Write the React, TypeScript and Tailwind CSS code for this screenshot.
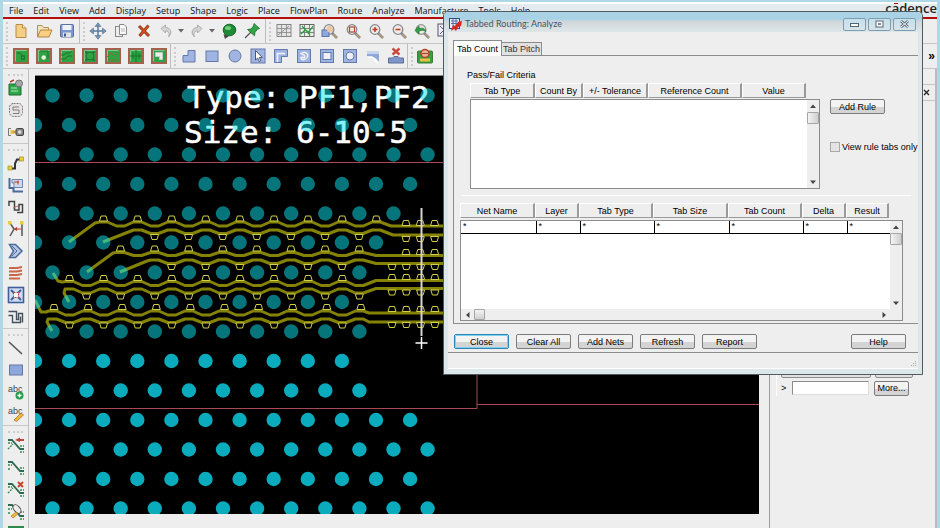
import React from "react";

type Kids = { children?: React.ReactNode };

const ui = "font-['Liberation_Sans',Arial,sans-serif]";

/* ---------- toolbar icons ---------- */

const Glyph = ({ children }: Kids) => (
  <svg width="18" height="18" viewBox="0 0 18 18" fill="none" aria-hidden="true" className="block shrink-0">
    {children}
  </svg>
);

const Board = ({ children }: Kids) => (
  <Glyph>
    <rect x="1" y="1" width="16" height="16" fill="#a5614f" />
    <rect x="3" y="3" width="12" height="12" fill="#2fa341" />
    <path d="M3.500 14.500v-11h11" stroke="#7fc98a" />
    <g stroke="#1b7431" strokeWidth="1">{children}</g>
  </Glyph>
);

const Lens = ({ children, ring = "#85898f" }: Kids & { ring?: string }) => (
  <Glyph>
    <path d="M11 11l5 5" stroke="#7d8aa0" strokeWidth="2.6" />
    <path d="M12 12l4 4" stroke="#c89a5a" strokeWidth="1.2" />
    <circle cx="8" cy="7.5" r="4.8" fill="#f1e9e6" stroke={ring} strokeWidth="1.3" />
    {children}
  </Glyph>
);

const blue = { fill: "#9fb4e0", stroke: "#6278a8", strokeWidth: 1 };

const fileIcons: [string, React.ReactNode][] = [
  ["New", <Glyph><path d="M4 2.500h6.500L14 6v9.500H4z" fill="#f3cf85" stroke="#b98b45" /><path d="M10.500 2.500V6H14" fill="#fff3cf" stroke="#b98b45" /></Glyph>],
  ["Open", <Glyph><path d="M2.500 15V3.500H7l1.500 2h5V8" fill="#f2e3bf" stroke="#b58d4d" /><path d="M2.500 15L5.500 8h11.500l-3 7z" fill="#f8cf80" stroke="#b58344" /></Glyph>],
  ["Save", <Glyph><rect x="2.500" y="2.500" width="13" height="12.500" rx="1" fill="#7d96cf" stroke="#5e6f9a" /><rect x="4.500" y="3" width="9" height="5" fill="#eef1f7" /><rect x="5" y="10.500" width="8" height="4.500" fill="#dfe2e6" /><rect x="6" y="11.500" width="2" height="3" fill="#42578a" /></Glyph>],
];

const editIcons: [string, React.ReactNode][] = [
  ["Move", <Glyph><path d="M9 1.500v15M1.500 9h15" stroke="#59799b" strokeWidth="1.500" /><path d="M9 .8L6 4.500h6zM9 17.200L6 13.500h6zM.8 9l3.700-3v6zM17.200 9l-3.700-3v6z" fill="#7897b5" stroke="#506f90" strokeWidth=".6" /></Glyph>],
  ["Copy", <Glyph><rect x="3.500" y="4.500" width="7" height="10" fill="#eee" stroke="#888" /><path d="M7.500 2.500h4.500l2.500 2.500v7.500h-7z" fill="#f8f8f8" stroke="#888" /><path d="M9 7h4M9 9h4" stroke="#aaa" strokeWidth=".8" /></Glyph>],
  ["Delete", <Glyph><path d="M4 4l10 10M13.500 3.500L4.500 14" stroke="#8b3a1b" strokeWidth="3" /><path d="M4.500 4.500l9 9M13 4l-8 9.500" stroke="#d8501e" strokeWidth="1.400" /></Glyph>],
];

const Undo = () => (
  <Glyph><path d="M3 6.500L7.500 3v2.500c5 0 7.500 5 3 9.500 1.500-4 0-6-3-6V11z" fill="#d4d4d4" stroke="#a2a2a2" strokeWidth=".8" /></Glyph>
);
const Redo = () => (
  <Glyph><path d="M15 6.500L10.500 3v2.500c-5 0-7.500 5-3 9.500-1.500-4 0-6 3-6V11z" fill="#d4d4d4" stroke="#a2a2a2" strokeWidth=".8" /></Glyph>
);

const pinIcons: [string, React.ReactNode][] = [
  ["Highlight", <Glyph><path d="M3.500 12l1.500 5 4-3z" fill="#444" /><ellipse cx="9.500" cy="8" rx="6.300" ry="5.800" fill="#1f8a35" stroke="#196627" /><ellipse cx="8" cy="6" rx="3" ry="2" fill="#6fd07b" /></Glyph>],
  ["Pin", <Glyph><path d="M8 10L2 16" stroke="#555" strokeWidth="1.300" /><path d="M11 1.500l5.500 5-2 .8-2.500 3-.5 3.500L4.500 7.500 8 7l2.500-3z" fill="#2fa545" stroke="#1b6b2c" strokeWidth=".8" /></Glyph>],
];

const viewIcons: [string, React.ReactNode][] = [
  ["Grid", <Glyph><rect x="2" y="2.500" width="14" height="12" fill="#e4e4e4" stroke="#858585" /><path d="M2 6.500h14M2 10.500h14M6.500 2.500v12M11.500 2.500v12M3 13L14 4" stroke="#8e8e8e" strokeWidth=".9" /></Glyph>],
  ["Colored grid", <Glyph><rect x="2" y="2.500" width="14" height="12" fill="#e6eee6" stroke="#666" /><path d="M2 6.500h14M2 10.500h14M6.500 2.500v12M11.500 2.500v12" stroke="#777" strokeWidth=".9" /><path d="M3 12l4-4 4 2 4-6M4 4l8 9" stroke="#28a03d" strokeWidth="1.200" /></Glyph>],
  ["Zoom points", <Lens><rect x="1" y="8" width="7" height="6.500" fill="#8ea9dd" stroke="#5d74a8" /><circle cx="9" cy="7" r="3.200" fill="#eac9a4" /></Lens>],
  ["Zoom fit", <Lens><rect x="5.500" y="5" width="5" height="5" stroke="#b34a35" strokeWidth="1.200" /></Lens>],
  ["Zoom in", <Lens><path d="M8 5v5M5.500 7.500h5" stroke="#c2341f" strokeWidth="1.500" /></Lens>],
  ["Zoom out", <Lens><path d="M5.500 7.500h5" stroke="#c2341f" strokeWidth="1.500" /></Lens>],
  ["Zoom previous", <Lens ring="#8a948c"><path d="M2 8.500L6 4v2.500c4-1 6 0 7 3-2-1.500-4-1.500-7-.5V12z" fill="#31a046" stroke="#1e6e2e" strokeWidth=".7" /></Lens>],
  ["Zoom selection", <Glyph><rect x="2" y="2" width="12" height="12" fill="#eef" stroke="#556" /><path d="M4 4l8 8M12 4l-8 8" stroke="#557" /></Glyph>],
];

const boardIcons: [string, React.ReactNode][] = [
  ["General edit", <Board><path d="M5 6h3l2 3h3M9 12h4" /><rect x="9.500" y="9" width="3" height="3" /></Board>],
  ["Placement edit", <Board><path d="M5 4h8v8" /><circle cx="8.700" cy="10.500" r="2.200" fill="#e7efe7" stroke="none" /></Board>],
  ["Etch edit", <Board><path d="M3 8h3l2-2h3l3-2M3 12h4l3-3h4" /></Board>],
  ["Flow planner", <Board><circle cx="9" cy="9" r="4" /><path d="M4 5h2.500M11.500 5H14M4 13h2.500M11.500 13H14" strokeWidth="1.600" /></Board>],
  ["Signal integrity", <Board><path d="M3 10l4-4 3 3 4-4M4 13h9" stroke="#8a6a3c" /></Board>],
  ["IR drop", <Board><path d="M9 3v12M3 9h12M6 6v6M12 6v6" /></Board>],
  ["Shape edit", <Board><path d="M5.500 5.500h7v7H9.500v-3h-4z" fill="#e9eee9" stroke="#bcc" /></Board>],
];

const shapeIcons: [string, React.ReactNode][] = [
  ["Polygon", <Glyph><path d="M8 3.500h7V15H3V8.500h5z" {...blue} /></Glyph>],
  ["Rectangle", <Glyph><rect x="3" y="4" width="12" height="10.500" {...blue} /></Glyph>],
  ["Circle", <Glyph><circle cx="9" cy="9" r="6" {...blue} /></Glyph>],
  ["Select shape", <Glyph><rect x="2" y="2" width="14" height="14" {...blue} /><path d="M6.500 3.500v9.500l2.200-2 1.500 3.500 1.600-.8-1.500-3.200h3z" fill="#fff" stroke="#3e4a66" strokeWidth=".9" /></Glyph>],
  ["Void polygon", <Glyph><path d="M2.500 2.500h13v7h-6v6h-7z" {...blue} /><path d="M5.500 15V6.500H13" stroke="#f2f4fa" strokeWidth="1.600" /></Glyph>],
  ["Void circle", <Glyph><rect x="2.500" y="2.500" width="13" height="13" {...blue} /><path d="M6 6.500c5-3 8 1 6 4s-6 3-6 0h3.500v-2z" stroke="#f6f7fb" strokeWidth="1.300" /></Glyph>],
  ["Void rectangle", <Glyph><rect x="2.500" y="2.500" width="13" height="13" {...blue} /><rect x="5" y="5.500" width="8" height="7" fill="#eef0f5" stroke="#6278a8" /></Glyph>],
  ["Void ellipse", <Glyph><rect x="2.500" y="2.500" width="13" height="13" {...blue} /><circle cx="9" cy="9" r="4" fill="#eef0f5" stroke="#6278a8" /></Glyph>],
  ["Delete island", <Glyph><path d="M3 4h12v11c-2-3-4-5-7-5H3z" fill="#8ea6d8" /><path d="M3 4h12v3H3z" fill="#c9d3ea" /><path d="M3 10h5l6 6" stroke="#fff" strokeWidth="1.500" /></Glyph>],
  ["Remove shape", <Glyph><path d="M5.500 1.500l7 6M12.500 1.500l-7 6" stroke="#c94a3b" strokeWidth="2.400" /><path d="M1.500 11h4l1.500-1.500h4l1.500 1.500h4v5h-15z" fill="#8096c6" stroke="#5c6d97" /></Glyph>],
];

const Kit = () => (
  <Glyph><rect x="1.500" y="4" width="15" height="12" rx="1" fill="#2fa341" stroke="#3b7d36" /><circle cx="9" cy="6.500" r="4" fill="#e9b393" stroke="#b3402b" strokeWidth="1.500" /><path d="M4 11.500h10v3H4z" fill="#e8c341" /><path d="M6 6.500h6" stroke="#b3402b" /></Glyph>
);

const sideGroups: [string, React.ReactNode][][] = [
  [
    ["Place manual", <Glyph><path d="M2 5h9l3 3v8H2z" fill="#2fa84a" stroke="#1d6b30" /><circle cx="12" cy="4.500" r="3.500" fill="#a4a8a8" stroke="#6b6f70" /><path d="M4 9h6M4 12h7" stroke="#b8e6bd" /><path d="M3 3l4-2" stroke="#c0392b" strokeWidth="1.500" /></Glyph>],
    ["Symbol", <Glyph><rect x="2.500" y="2.500" width="13" height="13" rx="4" fill="#e4e4e4" stroke="#777" strokeDasharray="2 1" /><path d="M12 6H6v3h6v3.500H6" stroke="#8a7676" /></Glyph>],
    ["Quickplace", <Glyph><path d="M4 5.500H1.500v7H4" stroke="#777" /><rect x="3.500" y="7" width="4" height="4" fill="#e3c24d" /><path d="M6.500 9h3" stroke="#c0392b" /><rect x="9" y="5.500" width="7.500" height="7" rx="1.500" fill="#888" stroke="#444" /><circle cx="12.700" cy="9" r="1.800" fill="#ddd" /></Glyph>],
  ],
  [
    ["Add connect", <Glyph><path d="M3 14.500h5v-5l2-4h5" stroke="#333" strokeWidth="2" /><rect x="1" y="12" width="4" height="4" fill="#e7cf3f" stroke="#988421" strokeWidth=".6" /><rect x="12.500" y="3" width="4" height="4" fill="#e7cf3f" stroke="#988421" strokeWidth=".6" /></Glyph>],
    ["Slide", <Glyph><path d="M2.500 2v10h4v3.500h9.500" stroke="#4b6b9a" strokeWidth="2" /><path d="M5 3.500h10.500v8H7V7H5z" fill="#cfd9ea" stroke="#6784b2" /><path d="M7 6h5M11 4.500v4" stroke="#c0392b" /></Glyph>],
    ["Delay tune", <Glyph><path d="M2 8V3.500h5.500V12H12V6.500h3.500v8H10" stroke="#444" strokeWidth="1.500" /><path d="M6 10l5-2" stroke="#c46a5c" /></Glyph>],
    ["Custom smooth", <Glyph><path d="M3 3l4 6-4 7M15 3v13" stroke="#555" strokeWidth="1.500" /><path d="M7 9h7M10 7.500l-2 1.500 2 1.500" stroke="#c0392b" strokeWidth="1.200" /><rect x="1" y="1" width="3.500" height="3.500" fill="#e7cf3f" /><rect x="13" y="1" width="3.500" height="3.500" fill="#e7cf3f" /></Glyph>],
    ["Spread", <Glyph><path d="M2.500 2.500h6l6.500 6.500-6.500 6.500h-6l4-6.500z" fill="#b7c9e4" stroke="#4b6b9a" strokeWidth="1.500" /><path d="M5 4l5 5-5 5" stroke="#4b6b9a" /></Glyph>],
    ["Vertex", <Glyph><path d="M2 4h8l5-1M2 7.500h8M2 11h8l5-1M2 14.500h11M10 7.500l5-1" stroke="#c8674a" strokeWidth="2" /></Glyph>],
    ["Fanout", <Glyph><rect x="1.500" y="1.500" width="15" height="15" fill="#cfdcf2" stroke="#3f5f9a" strokeWidth="1.600" /><path d="M4 4l3 3M14 4l-3 3M4 14l3-3M14 14l-3-3" stroke="#3f5f9a" strokeWidth="2" /><rect x="6.500" y="6.500" width="5" height="5" fill="#fff" stroke="#c0392b" strokeDasharray="2 1" /></Glyph>],
    ["Phase tune", <Glyph><path d="M1.500 3.500h8v8h2v-6h4v9M1.500 7.500h4v7h8v-6" stroke="#44505e" strokeWidth="1.400" /></Glyph>],
  ],
  [
    ["Add line", <Glyph><path d="M2 3l13 12" stroke="#555" strokeWidth="1.600" /></Glyph>],
    ["Add rectangle", <Glyph><rect x="2.500" y="4" width="13" height="10" fill="#8ea8de" stroke="#66779c" /></Glyph>],
    ["Add text", <Glyph><text x="1" y="9" fontSize="9" fill="#444" className="font-['Liberation_Sans']">abc</text><circle cx="12.500" cy="12.500" r="4" fill="#2a9a4c" /><path d="M12.500 10.500v4M10.500 12.500h4" stroke="#fff" strokeWidth="1.300" /></Glyph>],
    ["Edit text", <Glyph><text x="1" y="9" fontSize="9" fill="#444" className="font-['Liberation_Sans']">abc</text><path d="M7 15l7-7 2.500 2-7 6.500z" fill="#f0b73c" stroke="#9a6a24" strokeWidth=".7" /></Glyph>],
  ],
  [
    ["Net assign", <Glyph><path d="M1 4h4l8 9h4" stroke="#2c6b52" strokeWidth="1.800" /><path d="M1 7h4M13 10h4M1 13l5-5M13 16h4" stroke="#2f8a4a" strokeWidth="1.300" strokeDasharray="2 1" /><path d="M8 4l5-2.500V3h4v2h-4v1z" fill="#b9473c" /></Glyph>],
    ["Net path", <Glyph><path d="M1 4h4l8 9h4" stroke="#2c6b52" strokeWidth="1.800" /><path d="M1 7h4M13 10h4M1 11h3M13 16h4" stroke="#2f8a4a" strokeWidth="1.300" strokeDasharray="2 1" /></Glyph>],
    ["Net remove", <Glyph><path d="M1 4h4l8 9h4" stroke="#2c6b52" strokeWidth="1.800" /><path d="M1 7h4M13 10h4M1 13l5-5M13 16h4" stroke="#2f8a4a" strokeWidth="1.300" strokeDasharray="2 1" /><path d="M11 2l5 5M16 2l-5 5" stroke="#c0492b" strokeWidth="2" /></Glyph>],
    ["Net edit", <Glyph><path d="M1 3h4l8 11h4" stroke="#2c6b52" strokeWidth="1.800" /><path d="M1 7h4M13 10h4M1 11h3M13 17h4" stroke="#2f8a4a" strokeWidth="1.300" strokeDasharray="2 1" /><ellipse cx="10" cy="7" rx="5" ry="3" transform="rotate(50 10 7)" fill="#eee" stroke="#555" /><path d="M4 14l5-4 2 2-5 4z" fill="#f0b73c" stroke="#9a6a24" strokeWidth=".6" /></Glyph>],
    ["Net view", <Glyph><path d="M1 3h16M3 3v14M15 3v14" stroke="#2f8a4a" strokeWidth="1.800" /></Glyph>],
  ],
];

const Tool = ({ name, children, wide = "w-[23px]" }: Kids & { name: string; wide?: string }) => (
  <button type="button" title={name} aria-label={name} className={`flex h-[22px] shrink-0 items-center justify-center ${wide}`}>
    {children}
  </button>
);

const Handle = () => <div className="h-[19px] w-0 shrink-0 border-l-2 border-dotted border-[#cccccc]" />;
const Divider = () => <div className="h-full w-px shrink-0 bg-[#bdbdbd]" />;
const Caret = () => (
  <svg width="6" height="4" viewBox="0 0 6 4" aria-hidden="true"><path d="M0 0h6L3 3.500z" fill="#666" /></svg>
);
const list = (items: [string, React.ReactNode][]) =>
  items.map(([name, icon]) => <Tool key={name} name={name}>{icon}</Tool>);

/* ---------- board canvas ---------- */

const pitch = 34.1;

const padRows = [
  { y: 95.500, x: 52.500, n: 12 }, { y: 125, x: 35, n: 12 }, { y: 154.500, x: 52.500, n: 12 },
  { y: 184, x: 35, n: 12 }, { y: 213.500, x: 52.500, n: 11 }, { y: 242.500, x: 35, n: 11 },
  { y: 272.500, x: 52.500, n: 10 }, { y: 302, x: 35, n: 10 }, { y: 331.500, x: 52.500, n: 10 },
  { y: 361, x: 35, n: 10, lit: true }, { y: 390.500, x: 52.500, n: 10, lit: true },
  { y: 420, x: 35, n: 12, lit: true }, { y: 449.500, x: 52.500, n: 12, lit: true },
  { y: 479, x: 35, n: 12, lit: true }, { y: 508.500, x: 52.500, n: 12, lit: true },
];

/* lead: entry path; wave runs from `from`, high crest first, until `to`, then straight at `flat` */
const traces = [
  { lead: "M69 242L95 223", from: 103.500, hi: 222, lo: 226, to: 385, flat: 226, end: 391 },
  { lead: "M103 242L131 231", from: 137.500, hi: 230, lo: 233.500, to: 385, flat: 235, end: 393 },
  { lead: "M87 272L113 253", from: 120.500, hi: 252.500, lo: 255.500, to: 370, flat: 255.500, end: 376 },
  { lead: "M120 272L147 261", from: 154.500, hi: 260, lo: 263.500, to: 370, flat: 263.500, end: 376 },
  { lead: "M53 273L58 281L62 282", from: 69.500, hi: 281.500, lo: 285.500, to: 370, flat: 280.500, end: 376 },
  { lead: "M69 302L64 293L65 289", from: 69.500, hi: 289, lo: 293, to: 370, flat: 288.500, end: 376 },
  { lead: "M35 300L41 312L46 312", from: 52.500, hi: 311, lo: 315, to: 363, flat: 313, end: 369 },
  { lead: "M52 331L47 322L48 319", from: 52.500, hi: 319, lo: 322.500, to: 363, flat: 322, end: 369 },
];

const tracePath = (t: (typeof traces)[number]) => {
  let d = t.lead;
  for (let i = 0; ; i++) {
    const x = t.from + (i * pitch) / 2;
    if (x > t.to) break;
    const y = i % 2 ? t.lo : t.hi;
    d += `L${x - 4} ${y}L${x + 4} ${y}`;
  }
  return `${d}L${t.end} ${t.flat}H445`;
};

const tabs = [
  { x: 103.500, n: 9, y: 216, up: true, far: 406, fy: 220.500 },
  { x: 154.500, n: 7, y: 234.500, up: false, far: 406, fy: 236.500 },
  { x: 120.500, n: 8, y: 246, up: true, far: 406, fy: 249.500 },
  { x: 171.500, n: 6, y: 264.500, up: false, far: 392, fy: 264.500 },
  { x: 69.500, n: 9, y: 275.500, up: true, far: 392, fy: 274.500 },
  { x: 86.500, n: 9, y: 294, up: false, far: 392, fy: 290 },
  { x: 54, n: 10, y: 304.500, up: true, far: 392, fy: 306.500 },
  { x: 69.500, n: 9, y: 323, up: false, far: 392, fy: 322.500 },
];

const tabPath = (x: number, y: number, up: boolean) =>
  up ? `M${x - 4} ${y + 5}l1.500 -5h5l1.500 5z` : `M${x - 4} ${y}l1.500 5h5l1.500 -5z`;

const tabMarks = tabs.flatMap((t) => {
  const marks = Array.from({ length: t.n }, (_, i) => tabPath(t.x + i * pitch, t.y, t.up));
  for (let x = t.far; x < 440; x += 14.300) marks.push(tabPath(x, t.fy, t.up));
  return marks;
}).join("");

const BoardCanvas = () => (
  <svg className="block h-full w-full bg-black" role="img" aria-label="Board layout">
    <g transform="translate(-35 -75)">
      <path d="M35 75.500H760" stroke="#8a8a8a" />
      <path d="M35 162.500H445M35 408.500H477V370M477 404.500H760" fill="none" stroke="#a84a55" />
      <g fill="#fff" stroke="#fff" strokeWidth=".5" fontSize="31" className="font-['DejaVu_Sans_Mono',monospace]">
        <text x="187" y="108">Type: PF1,PF2</text>
        <text x="184" y="143">Size: 6-10-5</text>
      </g>
      <g fill="none" stroke="#858305" strokeWidth="3" strokeLinejoin="round">
        {traces.map((t) => <path key={t.lead} d={tracePath(t)} />)}
      </g>
      <path d={tabMarks} fill="#000" stroke="#d2d04a" strokeWidth="1" />
      {padRows.map((r) =>
        Array.from({ length: r.n }, (_, i) => (
          <circle key={`${r.y}-${i}`} cx={r.x + i * pitch} cy={r.y} r="7.200" fill={r.lit ? "#09abbd" : "#0ceaf6"} fillOpacity={r.lit ? 1 : 0.5} />
        )),
      )}
      <path d="M421.500 208V336" stroke="#d8d2d8" strokeWidth="2" />
      <path d="M421.500 337V349M415.500 343H427.500" stroke="#fff" strokeWidth="1.500" />
    </g>
  </svg>
);

/* ---------- dialog ---------- */

const ruleCols: [string, string][] = [
  ["Tab Type", "w-[65px]"], ["Count By", "w-[48px]"], ["+/- Tolerance", "w-[65px]"],
  ["Reference Count", "w-[94px]"], ["Value", "w-[64px]"],
];
const netCols: [string, string][] = [
  ["Net Name", "w-[75px]"], ["Layer", "w-[44px]"], ["Tab Type", "w-[74px]"], ["Tab Size", "w-[75px]"],
  ["Tab Count", "w-[74px]"], ["Delta", "w-[44px]"], ["Result", "w-[43px]"],
];

const HeadRow = ({ cols }: { cols: [string, string][] }) => (
  <table className="table-fixed border-separate border-spacing-0">
    <thead>
      <tr>
        {cols.map(([name, w]) => (
          <th key={name} scope="col" className={`${w} h-[15px] border-t border-r-2 border-b border-l border-t-white border-r-[#9a9a9a] border-b-[#9a9a9a] border-l-white p-0 text-center font-normal whitespace-nowrap leading-3`}>
            {name}
          </th>
        ))}
      </tr>
    </thead>
  </table>
);

const Arrow = ({ d, label, size = "h-[12px] w-[12px]" }: { d: string; label: string; size?: string }) => (
  <button type="button" aria-label={label} className={`${size} flex shrink-0 items-center justify-center`}>
    <svg width="6" height="6" viewBox="0 0 6 6" aria-hidden="true"><path d={d} fill="#444" /></svg>
  </button>
);

const VScroll = () => (
  <div className="flex w-[12px] shrink-0 flex-col bg-[#eeeeee]">
    <Arrow label="Scroll up" d="M0 5h6L3 1.500z" />
    <div className="h-[12px] rounded-[1px] border border-[#a5a5a5] bg-gradient-to-r from-[#f4f4f4] to-[#cfcfcf]" />
    <div className="flex-1" />
    <Arrow label="Scroll down" d="M0 1.500h6L3 5z" />
  </div>
);

const Push = ({ children, primary }: Kids & { primary?: boolean }) => (
  <button
    type="button"
    className={`h-[15px] w-[55px] shrink-0 rounded-[2px] border bg-gradient-to-b from-[#f3f3f3] from-50% to-[#d4d4d4] to-55% text-center leading-3 whitespace-nowrap ${primary ? "border-[#2a86b8] outline outline-1 -outline-offset-2 outline-[#7fd0f0]" : "border-[#7c7c7c]"}`}
  >
    {children}
  </button>
);

const WinButton = ({ name, children }: Kids & { name: string }) => (
  <button type="button" aria-label={name} className="flex h-[13px] w-[23px] items-center justify-center rounded-[2px] border border-[#7f9db0] bg-gradient-to-b from-[#c5e0ec] to-[#d7e4ea]">
    <svg width="9" height="8" viewBox="0 0 9 8" fill="none" aria-hidden="true">{children}</svg>
  </button>
);

const Dialog = () => (
  <section aria-label="Tabbed Routing: Analyze" className={`absolute top-[9px] left-[440px] w-[480px] rounded-t-[5px] border border-[#505a60] bg-[#dce7ea] px-1 pb-[5px] text-[9px] text-black ${ui}`}>
    <header className="-mx-1 flex h-[20px] items-center gap-[3px] rounded-t-[4px] bg-gradient-to-b from-[#a9d3e5] from-35% via-[#d3d7d9] via-50% to-[#dce7ea] pr-[6px] pl-[5px] pt-1">
      <svg width="13" height="13" viewBox="0 0 13 13" aria-hidden="true">
        <rect x=".5" y=".5" width="10" height="10" fill="#eef" stroke="#334a7c" />
        <path d="M2 3h7M2 5.500h7M4 1v8M7 1v8" stroke="#4a6296" strokeWidth=".9" />
        <path d="M2 13l2-6 2 1 3-4 4-1-1 5-3 1-2 4-2-2z" fill="#d9281c" />
      </svg>
      <h1 className="flex-1 font-['Lato','Open_Sans',sans-serif] text-[9px] leading-3 text-[#3e5464]">Tabbed Routing: Analyze</h1>
      <div className="flex gap-[2px]">
        <WinButton name="Minimize"><rect x=".5" y="3.500" width="8" height="3" fill="#fff" stroke="#556673" /></WinButton>
        <WinButton name="Maximize"><rect x="1" y="1" width="7" height="6" fill="#fff" stroke="#556673" /><path d="M3 4h3" stroke="#556673" strokeWidth="1.500" /></WinButton>
        <WinButton name="Close window"><path d="M1 1l7 6M8 1L1 7" stroke="#556673" strokeWidth="2.600" /><path d="M1 1l7 6M8 1L1 7" stroke="#fff" /></WinButton>
      </div>
    </header>

    <div className="bg-[#eeeeee] pt-2">
      <div className="pl-[5px]">
        <div role="tablist" className="-mb-px flex items-end">
          <button type="button" role="tab" aria-selected="true" className="relative h-[16px] w-[49px] border border-b-0 border-[#8c8c8c] bg-white leading-3 whitespace-nowrap">Tab Count</button>
          <button type="button" role="tab" aria-selected="false" className="mb-px h-[13px] w-[40px] border border-b-0 border-l-0 border-[#8c8c8c] bg-[#e2e2e2] leading-3 whitespace-nowrap text-[#333]">Tab Pitch</button>
        </div>
        <div className="border border-r-0 border-[#8c8c8c] pt-[13px] pb-[2px]">
          <h2 className="pl-[13px] leading-3">Pass/Fail Criteria</h2>
          <div className="flex items-start pl-4">
            <div className="pt-[2px]">
              <HeadRow cols={ruleCols} />
              <div className="mt-px flex h-[90px] w-[350px] border border-[#8c8c8c] bg-white">
                <div className="flex-1" />
                <VScroll />
              </div>
            </div>
            <div className="flex flex-col items-start gap-[27px] pt-[18px] pl-[10px]">
              <Push>Add Rule</Push>
              <label className="flex items-center gap-[2px] whitespace-nowrap leading-3">
                <input type="checkbox" className="m-0 h-[10px] w-[10px] appearance-none border border-[#a8a8a8] bg-[#e4e4e4]" />
                View rule tabs only
              </label>
            </div>
          </div>
          <div className="mx-[7px] mt-[6px] h-px bg-white" />
          <div className="pt-[7px] pl-[6px]">
            <HeadRow cols={netCols} />
            <div className="mt-[2px] w-[443px] border border-[#8c8c8c] bg-[#eeeeee]">
              <div className="flex h-[88px]">
                <div className="flex-1 bg-white">
                  <table className="table-fixed border-collapse">
                    <tbody>
                      <tr>
                        {netCols.map(([name, w]) => (
                          <td key={name} className={`${w} h-[12px] border-r border-b border-black p-0 pl-[2px] text-[9px] leading-[11px] last:border-r-0`}>*</td>
                        ))}
                      </tr>
                    </tbody>
                  </table>
                </div>
                <VScroll />
              </div>
              <div className="flex h-[11px] items-center pr-[12px]">
                <Arrow label="Scroll left" d="M4.500 0v6L1 3z" size="h-[11px] w-[13px]" />
                <div className="h-[11px] w-[11px] rounded-[1px] border border-[#a5a5a5] bg-gradient-to-b from-[#f4f4f4] to-[#cfcfcf]" />
                <div className="flex-1" />
                <Arrow label="Scroll right" d="M1.500 0v6L5 3z" />
              </div>
            </div>
          </div>
        </div>
      </div>
      <div className="flex gap-[7px] pt-[10px] pr-3 pb-[3px] pl-[6px]">
        <Push primary>Close</Push>
        <Push>Clear All</Push>
        <Push>Add Nets</Push>
        <Push>Refresh</Push>
        <Push>Report</Push>
        <span className="flex-1" />
        <Push>Help</Push>
      </div>
      <footer className="flex h-[17px] items-end justify-end border-t border-b border-t-[#8c8c8c] border-b-white p-px">
        <svg width="6" height="6" viewBox="0 0 6 6" aria-hidden="true"><path d="M4 0h1v1H4zM2 2h1v1H2zM4 2h1v1H4zM0 4h1v1H0zM2 4h1v1H2zM4 4h1v1H4z" fill="#aaa" /></svg>
      </footer>
    </div>
  </section>
);

/* ---------- shell ---------- */

const menus = ["File", "Edit", "View", "Add", "Display", "Setup", "Shape", "Logic", "Place", "FlowPlan", "Route", "Analyze", "Manufacture", "Tools", "Help"];

export default function App() {
  return (
    <div className="relative flex h-screen flex-col overflow-hidden border-x-[3px] border-t-2 border-[#afd8e7] bg-[#eeeeee]">
      <div className="flex h-[15px] shrink-0 items-center border-t-2 border-white bg-[#e4ebef]">
        <nav className="flex gap-[10px] pl-[6px] font-['Open_Sans',sans-serif] text-[9px] leading-3 text-[#111]">
          {menus.map((m) => <button key={m} type="button">{m}</button>)}
        </nav>
        <span className="ml-auto self-start font-['Open_Sans',sans-serif] text-[13px] font-semibold leading-[8px] text-[#222]">
          c<span className="relative">a<span className="absolute top-[4px] left-[2px] h-px w-[4px] bg-[#c00000]" /></span>dence
        </span>
      </div>
      <div className="h-[2px] shrink-0 bg-[#b80d0d]" />

      <div className="flex h-[25px] shrink-0 items-center border-b border-[#c4c4c4] pl-[3px]">
        <Handle />
        <div className="flex pl-px">{list(fileIcons)}</div>
        <div className="flex h-full items-center gap-[3px] pl-px"><Divider /><Handle /></div>
        <div className="flex items-center pl-px">
          {list(editIcons)}
          <Tool name="Undo"><Undo /></Tool>
          <Caret />
          <Tool name="Redo"><Redo /></Tool>
          <span className="px-[2px]"><Caret /></span>
          {list(pinIcons)}
        </div>
        <div className="flex h-full items-center gap-[3px] pl-[2px]"><Divider /><Handle /></div>
        <div className="flex items-center pl-px">{list(viewIcons)}</div>
      </div>

      <div className="flex h-[25px] shrink-0 items-center border-b border-[#c4c4c4] pl-[3px]">
        <Handle />
        <div className="flex pl-px">{list(boardIcons)}</div>
        <div className="flex h-full items-center gap-[3px]"><Divider /><Handle /></div>
        <div className="flex pl-px">{list(shapeIcons)}</div>
        <div className="flex h-full items-center gap-[3px]"><Divider /><Handle /></div>
        <Tool name="Toolkit"><Kit /></Tool>
        <button type="button" aria-label="More tools" className="ml-auto pr-[2px] font-['Liberation_Sans'] text-[12px] font-bold leading-4">»</button>
      </div>

      <div className="flex min-h-0 flex-1">
        <aside className="w-[26px] shrink-0 border-r border-[#c0c0c0]">
          {sideGroups.map((group, i) => (
            <div key={i} className="border-b border-[#c8c8c8]">
              <div className="mx-[5px] mb-px h-[7px] border-b-2 border-dotted border-[#cccccc]" />
              {group.map(([name, icon]) => <Tool key={name} name={name} wide="w-[25px]">{icon}</Tool>)}
            </div>
          ))}
        </aside>
        <main className="min-w-0 flex-1 pt-[6px] pr-[10px] pb-[14px] pl-[6px]">
          <BoardCanvas />
        </main>
        <aside className={`flex w-[168px] shrink-0 flex-col border-r-2 border-l border-r-[#b9bcbe] border-l-[#9c9c9c] text-[9px] ${ui}`}>
          <div className="h-[15px] shrink-0" />
          <div className="flex h-[17px] shrink-0 items-center justify-end border-y border-[#c4c4c4] pr-[5px]">
            <button type="button" aria-label="Close panel">
              <svg width="7" height="7" viewBox="0 0 7 7" aria-hidden="true"><path d="M1 1l5 5M6 1L1 6" stroke="#222" strokeWidth="1.300" /></svg>
            </button>
          </div>
          <div className="flex-1" />
          <div className="ml-[6px] mb-[132px] border-l border-white pl-1">
            <div className="flex gap-1 pb-[2px]">
              <button type="button" aria-label="Display options" className="h-[15px] w-[90px] rounded-[2px] border border-[#8c8c8c] bg-[#e0e0e0]" />
              <button type="button" aria-label="Apply" className="h-[15px] w-[38px] rounded-[2px] border border-[#8c8c8c] bg-[#e0e0e0]" />
            </div>
            <div className="flex items-center">
              <label htmlFor="command" className="w-[11px] text-[9px] leading-4">&gt;</label>
              <input id="command" type="text" className="h-[14px] w-[77px] border border-t-[#8c8c8c] border-r-[#ddd] border-b-[#ddd] border-l-[#8c8c8c] bg-white px-1" />
              <button type="button" className="ml-[5px] h-[15px] w-[35px] rounded-[2px] border border-[#7c7c7c] bg-gradient-to-b from-[#f3f3f3] from-50% to-[#d4d4d4] to-55% leading-3">More...</button>
            </div>
          </div>
        </aside>
      </div>

      <Dialog />
    </div>
  );
}
